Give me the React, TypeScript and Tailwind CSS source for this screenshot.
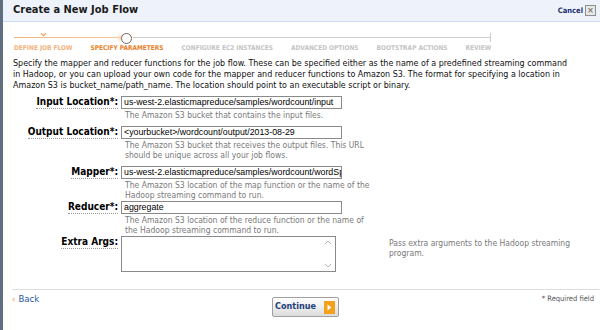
import React from 'react'

const body = { fontFamily: '"DejaVu Sans Condensed", "DejaVu Sans", sans-serif' }
const arial = { fontFamily: '"Liberation Sans", Arial, sans-serif' }

const steps = [
  { label: 'Define Job Flow', state: 'done' },
  { label: 'Specify Parameters', state: 'current' },
  { label: 'Configure EC2 Instances', state: 'todo' },
  { label: 'Advanced Options', state: 'todo' },
  { label: 'Bootstrap Actions', state: 'todo' },
  { label: 'Review', state: 'todo' },
]

function Field({ label, value, help, h }: { label: string; value: string; help: string[]; h: string }) {
  return (
    <div className={`flex ${h}`}>
      <div className="w-[118px] flex justify-end pr-[3px]">
        <span className="self-start text-[10px] leading-[12px] font-bold text-black border-b border-dotted border-[#999]">{label}</span>
      </div>
      <div className="flex flex-col">
        <div className="w-[221px] h-[13px] border border-[#8a8a8a] bg-white px-[2px] text-[8.8px] leading-[11px] text-black overflow-hidden whitespace-nowrap" style={arial}>
          {value}
        </div>
        <div className="mt-[2px] pl-[4px] text-[8.5px] leading-[9.5px] text-[#7a7a7a] whitespace-nowrap">
          {help.map(t => <div key={t}>{t}</div>)}
        </div>
      </div>
    </div>
  )
}

export default function App() {
  return (
    <div className="w-[600px] h-[330px] bg-white flex overflow-hidden" style={body}>
      <div className="w-[3px] bg-[#5f6f80]"></div>
      <div className="flex-1 flex flex-col">
        {/* header */}
        <div className="h-[22px] shrink-0 bg-[#eef3fb] border-b border-[#cdd9ec] flex items-center justify-between pl-[10px] pr-[4px]">
          <span className="text-[11px] font-bold text-[#1b1b1b]">Create a New Job Flow</span>
          <div className="flex items-center gap-[2px]">
            <span className="text-[7.5px] font-bold text-[#22306e]">Cancel</span>
            <span className="w-[11px] h-[11px] border border-[#8f8f8f] bg-[#e8e8e8] text-[9px] leading-[9px] text-[#555] flex items-center justify-center">×</span>
          </div>
        </div>

        {/* progress */}
        <div className="pl-[11px] pt-[10px]">
          <div className="relative flex w-fit gap-[18px]">
            <div className="absolute left-0 top-[5px] h-[1px] w-[108px] bg-gradient-to-r from-[#f3b27a] to-[#f7c89c]"></div>
            <div className="absolute left-[104px] top-[3px] h-[5px] w-[14px] rounded-full bg-[#fbd6b3] blur-[1.5px]"></div>
            <div className="absolute left-[119px] top-[5px] right-0 h-[1px] bg-[#cfcfcf]"></div>
            <div className="absolute right-0 top-[1px] h-[9px] w-[1px] bg-[#cfcfcf]"></div>
            {steps.map(s => (
              <div key={s.label} className="relative flex flex-col items-center">
                <div className="h-[12px] flex items-center justify-center">
                  {s.state === 'done' && (
                    <svg width="7" height="5" viewBox="0 0 7 5" className="-mt-[8px]">
                      <path d="M1 1.2 L3.5 3.6 L6 1.2" fill="none" stroke="#f0a060" strokeWidth="1.2" />
                    </svg>
                  )}
                  {s.state === 'current' && (
                    <div className="w-[11px] h-[11px] rounded-full bg-white border-[1.5px] border-[#6a6a6a]"></div>
                  )}
                </div>
                <span
                  className={`text-[6.5px] leading-[9px] uppercase whitespace-nowrap font-bold ${
                    s.state === 'current'
                      ? 'text-[#e8822a]'
                      : s.state === 'done'
                      ? 'text-[#f2b27c]'
                      : 'text-[#c4c4c4]'
                  }`}
                >
                  {s.label}
                </span>
              </div>
            ))}
          </div>
        </div>

        {/* intro */}
        <p className="mt-[5px] pl-[10px] pr-[8px] text-[8.9px] leading-[11px] text-[#111]">
          Specify the mapper and reducer functions for the job flow. These can be specified either as the name of a predefined streaming command
          <br />
          in Hadoop, or you can upload your own code for the mapper and reducer functions to Amazon S3. The format for specifying a location in
          <br />
          Amazon S3 is bucket_name/path_name. The location should point to an executable script or binary.
        </p>

        {/* form */}
        <div className="flex flex-col mt-[5px]">
          <Field h="h-[30px]" label="Input Location*:" value="us-west-2.elasticmapreduce/samples/wordcount/input" help={['The Amazon S3 bucket that contains the input files.']} />
          <Field h="h-[40px]" label="Output Location*:" value="<yourbucket>/wordcount/output/2013-08-29" help={['The Amazon S3 bucket that receives the output files. This URL', 'should be unique across all your job flows.']} />
          <Field h="h-[35px]" label="Mapper*:" value="us-west-2.elasticmapreduce/samples/wordcount/wordSplitter.py" help={['The Amazon S3 location of the map function or the name of the', 'Hadoop streaming command to run.']} />
          <Field h="h-[35px]" label="Reducer*:" value="aggregate" help={['The Amazon S3 location of the reduce function or the name of', 'the Hadoop streaming command to run.']} />
          <div className="flex">
            <div className="w-[118px] flex justify-end pr-[3px]">
              <span className="self-start text-[10px] leading-[12px] font-bold text-black border-b border-dotted border-[#999]">Extra Args:</span>
            </div>
            <div className="w-[215px] h-[36px] border border-[#8a8a8a] bg-white flex justify-end pr-[3px]">
              <div className="flex flex-col justify-between py-[3px]">
                <svg width="8" height="5" viewBox="0 0 8 5"><path d="M1 4 L4 1 L7 4" fill="none" stroke="#b5b5b5" /></svg>
                <svg width="8" height="5" viewBox="0 0 8 5"><path d="M1 1 L4 4 L7 1" fill="none" stroke="#b5b5b5" /></svg>
              </div>
            </div>
            <div className="ml-[53px] text-[8.5px] leading-[10px] text-[#7a7a7a] w-[200px] pt-[2px]">
              Pass extra arguments to the Hadoop streaming program.
            </div>
          </div>
        </div>

        {/* footer */}
        <div className="mt-[17px] ml-[9px] border-t border-[#dcdcdc] pt-[3px] flex items-start pr-[6px]">
          <div className="w-[260px]">
            <span className="text-[9.5px] leading-[12px] text-[#1f5aa6] flex items-center gap-[3px]">
              <span className="text-[#f08a24]">‹</span>Back
            </span>
          </div>
          <div className="mt-[4px] w-[67px] h-[20px] border border-[#a0a0a0] rounded-[2px] bg-gradient-to-b from-white to-[#dcdcdc] flex items-center justify-end gap-[8px] pr-[3px]">
            <span className="text-[9px] font-bold text-[#1d3f78]">Continue</span>
            <span className="w-[11px] h-[13px] bg-[#f5a01a] flex items-center justify-center">
              <svg width="5" height="7" viewBox="0 0 5 7"><path d="M0.5 0.5 L4.5 3.5 L0.5 6.5 Z" fill="#fff" /></svg>
            </span>
          </div>
          <span className="flex-1"></span>
          <span className="text-[7.5px] leading-[12px] text-[#555]">* Required field</span>
        </div>
      </div>
    </div>
  )
}
